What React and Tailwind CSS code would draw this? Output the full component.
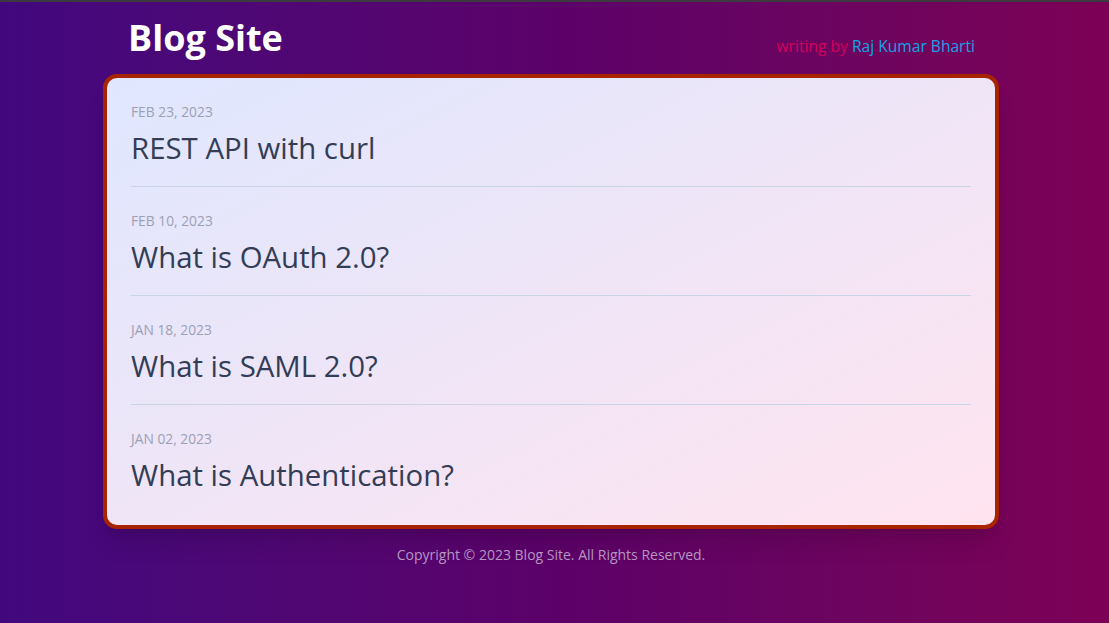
const posts = [
  { date: "Feb 23, 2023", title: "REST API with curl" },
  { date: "Feb 10, 2023", title: "What is OAuth 2.0?" },
  { date: "Jan 18, 2023", title: "What is SAML 2.0?" },
  { date: "Jan 02, 2023", title: "What is Authentication?" },
];

const App = () => {
  return (
    <div
      className="min-h-screen border-t-2 border-[#3b3b3f] bg-linear-to-r from-[#42077e] via-[#5c0069] to-[#7c0055]"
      style={{ fontFamily: '"Open Sans", "Noto Sans", sans-serif' }}
    >
      <div className="w-[896px] ml-[103px] pt-4">
        {/* Cabecera */}
        <header className="flex items-end justify-between pl-[25px] pr-6 mb-4">
          <h1 className="text-4xl font-bold text-white">Blog Site</h1>
          <p className="text-[15.6px] leading-6">
            <span className="text-[#d4005c]">writing by </span>
            <span className="text-[#14a3e6]">Raj Kumar Bharti</span>
          </p>
        </header>

        {/* Lista de posts */}
        <main className="rounded-[14px] border-4 border-[#a82400] bg-linear-to-br from-[#dfe7ff] to-[#ffe3ef] px-6 pt-6 pb-8 shadow-xl">
          {posts.map((post, index) => (
            <article
              key={post.title}
              className={
                index === posts.length - 1
                  ? "pt-0"
                  : "pb-5 border-b border-[#c9d5e4] mb-6"
              }
            >
              <p className="text-[13.8px] leading-5 uppercase text-[#9ca0b4]">{post.date}</p>
              <h2 className="mt-2 text-[29.4px] leading-9 text-[#333d55]">{post.title}</h2>
            </article>
          ))}
        </main>

        <footer className="mt-4 text-center text-sm text-[#b596c2]">
          Copyright © 2023 Blog Site. All Rights Reserved.
        </footer>
      </div>
    </div>
  );
};

export default App;
